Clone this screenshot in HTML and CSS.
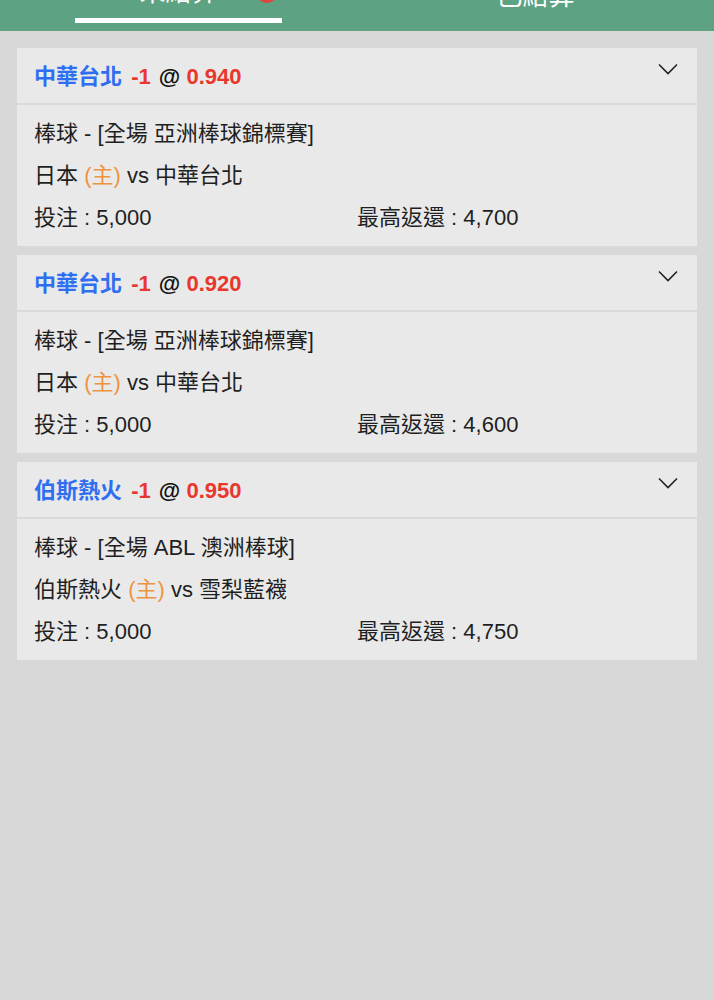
FILE: index.html
```html
<!DOCTYPE html>
<html lang="zh-Hant">
<head>
    <meta charset="UTF-8">
    <meta name="viewport" content="width=device-width, initial-scale=1.0">
    <title>注單</title>
    <link rel="stylesheet" href="styles.css">
</head>
<body>
    <header class="tabs">
        <div class="tab active">
            <span class="tab-label">未結算<span class="badge"></span></span>
        </div>
        <div class="tab">
            <span class="tab-label">已結算</span>
        </div>
    </header>

    <main class="bets">
        <div class="bet">
            <div class="bet-head">
                <div class="bet-title">
                    <span class="team">中華台北</span>
                    <span class="line">-1</span>
                    <span class="at">@</span>
                    <span class="odds">0.940</span>
                </div>
                <svg class="chevron" width="20" height="12" viewBox="0 0 20 12"><path d="M1 1.5 L10 10.5 L19 1.5" fill="none" stroke="#222" stroke-width="1.6"/></svg>
            </div>
            <div class="bet-body">
                <div class="row">棒球 - [全場 亞洲棒球錦標賽]</div>
                <div class="row">日本 <span class="home">(主)</span> vs 中華台北</div>
                <div class="row cols">
                    <span>投注 : 5,000</span>
                    <span>最高返還 : 4,700</span>
                </div>
            </div>
        </div>

        <div class="bet">
            <div class="bet-head">
                <div class="bet-title">
                    <span class="team">中華台北</span>
                    <span class="line">-1</span>
                    <span class="at">@</span>
                    <span class="odds">0.920</span>
                </div>
                <svg class="chevron" width="20" height="12" viewBox="0 0 20 12"><path d="M1 1.5 L10 10.5 L19 1.5" fill="none" stroke="#222" stroke-width="1.6"/></svg>
            </div>
            <div class="bet-body">
                <div class="row">棒球 - [全場 亞洲棒球錦標賽]</div>
                <div class="row">日本 <span class="home">(主)</span> vs 中華台北</div>
                <div class="row cols">
                    <span>投注 : 5,000</span>
                    <span>最高返還 : 4,600</span>
                </div>
            </div>
        </div>

        <div class="bet">
            <div class="bet-head">
                <div class="bet-title">
                    <span class="team">伯斯熱火</span>
                    <span class="line">-1</span>
                    <span class="at">@</span>
                    <span class="odds">0.950</span>
                </div>
                <svg class="chevron" width="20" height="12" viewBox="0 0 20 12"><path d="M1 1.5 L10 10.5 L19 1.5" fill="none" stroke="#222" stroke-width="1.6"/></svg>
            </div>
            <div class="bet-body">
                <div class="row">棒球 - [全場 ABL 澳洲棒球]</div>
                <div class="row">伯斯熱火 <span class="home">(主)</span> vs 雪梨藍襪</div>
                <div class="row cols">
                    <span>投注 : 5,000</span>
                    <span>最高返還 : 4,750</span>
                </div>
            </div>
        </div>
    </main>
</body>
</html>
```

FILE: styles.css
```css
body {
    margin: 0;
    background-color: #d8d8d8;
    font-family: "Liberation Sans", "Noto Sans CJK TC", sans-serif;
    color: #1f1f1f;
}
.tabs {
    display: flex;
    height: 31px;
    overflow: hidden;
    background-color: #5da282;
}
.tab {
    flex: 1;
    display: flex;
    flex-direction: column;
    align-items: center;
}
.tab-label {
    position: relative;
    margin-top: -17px;
    font-size: 26px;
    line-height: 26px;
    color: #fff;
}
.tab.active .tab-label {
    margin-top: -21px;
}
.tab.active::after {
    content: '';
    width: 207px;
    height: 5px;
    margin-top: 13px;
    background-color: #fff;
}
.badge {
    position: absolute;
    top: 2px;
    right: -60px;
    width: 22px;
    height: 22px;
    border-radius: 50%;
    background-color: #e0443a;
}
.bets {
    display: flex;
    flex-direction: column;
    gap: 9px;
    padding: 17px;
}
.bet {
    background-color: #e9e9e9;
}
.bet-head {
    display: flex;
    align-items: center;
    justify-content: space-between;
    height: 55px;
    padding: 0 19px 0 17px;
    border-bottom: 2px solid #d9d9d9;
}
.bet-title {
    font-size: 22px;
    font-weight: bold;
    margin-top: -4px;
}
.team {
    color: #2f6ef0;
    margin-right: 3px;
}
.line, .odds {
    color: #e8372c;
}
.line {
    margin-right: 2px;
}
.at {
    color: #111;
}
.chevron {
    margin-top: -14px;
}
.bet-body {
    padding: 8px 17px 7px;
    font-size: 22px;
}
.row {
    line-height: 42px;
}
.home {
    color: #ee9340;
}
.cols {
    display: grid;
    grid-template-columns: 1fr 1fr;
}
```
